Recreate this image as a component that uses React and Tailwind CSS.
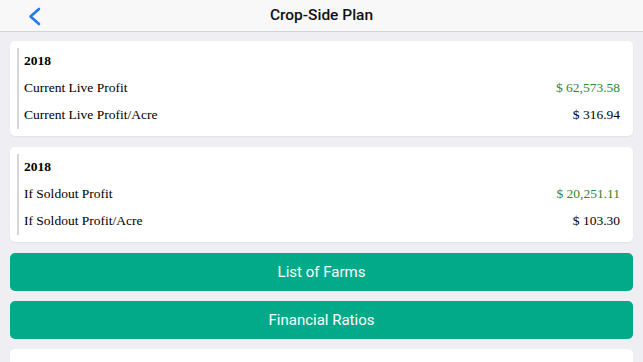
import React from "react";

const sans = { fontFamily: "Roboto, 'Liberation Sans', sans-serif" };
const serif = { fontFamily: "'Liberation Serif', 'Times New Roman', serif" };

const cards = [
    {
        year: "2018",
        rows: [
            { label: "Current Live Profit", value: "$ 62,573.58", green: true },
            { label: "Current Live Profit/Acre", value: "$ 316.94" },
        ],
    },
    {
        year: "2018",
        rows: [
            { label: "If Soldout Profit", value: "$ 20,251.11", green: true },
            { label: "If Soldout Profit/Acre", value: "$ 103.30" },
        ],
    },
];

function ProfitCard({ year, rows }) {
    return (
        <div className="bg-white rounded-[5px] shadow-[0_1px_2px_rgba(0,0,0,0.06)] py-[7px] pl-[7px] pr-[13px]">
            <div className="border-l-2 border-[#d6d6d6] pl-[5px]" style={serif}>
                <div className="h-[27px] flex items-center text-[13.5px] font-bold text-black">
                    {year}
                </div>
                {rows.map((r) => (
                    <div key={r.label} className="h-[27px] flex items-center justify-between text-[13.5px] text-black">
                        <span>{r.label}</span>
                        <span className={r.green ? "text-[#2f872f]" : "text-black"}>{r.value}</span>
                    </div>
                ))}
            </div>
        </div>
    );
}

export default function App() {
    return (
        <div className="w-[643px] h-[362px] overflow-hidden bg-[#efeff3]" style={sans}>
            {/* nav bar */}
            <div className="relative h-[32px] bg-[#f8f8f8] border-b border-[#d4d4d6] flex items-center justify-center">
                <svg
                    className="absolute left-[27px] top-[7px]"
                    width="16"
                    height="19"
                    viewBox="0 0 16 19"
                    fill="none"
                >
                    <polyline
                        points="12,2 3.5,9.5 12,17"
                        stroke="#1f7bf2"
                        strokeWidth="2.6"
                        strokeLinecap="round"
                        strokeLinejoin="round"
                    />
                </svg>
                <span className="text-[15.5px] font-medium text-[#111]">Crop-Side Plan</span>
            </div>

            <div className="px-[10px] pt-[9px] flex flex-col">
                <div className="flex flex-col gap-[11px]">
                    {cards.map((c, i) => (
                        <ProfitCard key={i} year={c.year} rows={c.rows} />
                    ))}
                </div>

                <div className="mt-[11px] flex flex-col gap-[10px]">
                    <button className="h-[38px] rounded-[5px] bg-[#03aa8a] text-white text-[15px]">
                        List of Farms
                    </button>
                    <button className="h-[38px] rounded-[5px] bg-[#03aa8a] text-white text-[15px]">
                        Financial Ratios
                    </button>
                    <div className="h-[40px] rounded-[5px] bg-white" />
                </div>
            </div>
        </div>
    );
}
